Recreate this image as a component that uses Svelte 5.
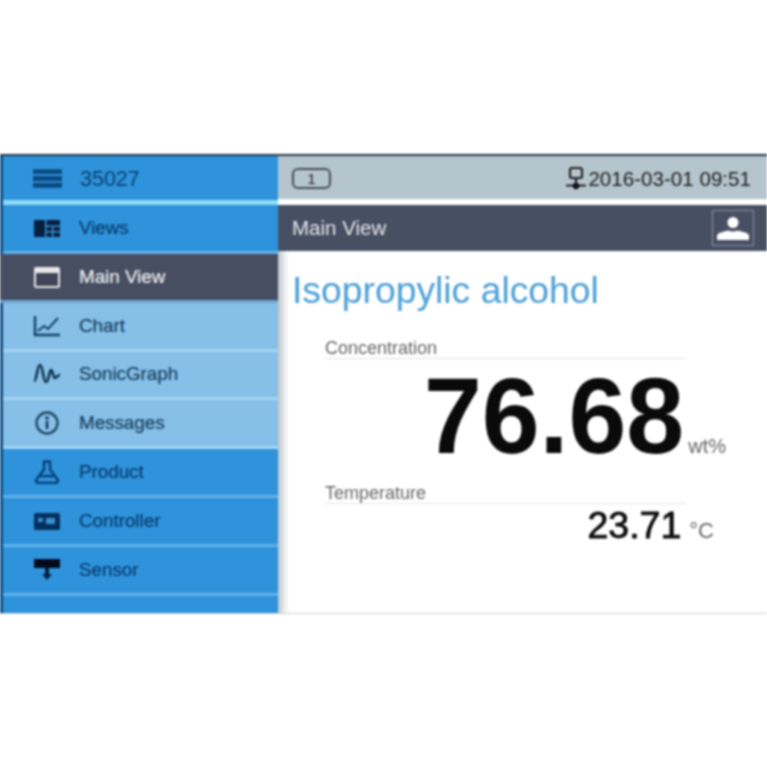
<script>
  const items = [
    { id: 'views', label: 'Views', tone: 'blue' },
    { id: 'main', label: 'Main View', tone: 'active' },
    { id: 'chart', label: 'Chart', tone: 'light' },
    { id: 'sonic', label: 'SonicGraph', tone: 'light' },
    { id: 'msg', label: 'Messages', tone: 'light' },
    { id: 'product', label: 'Product', tone: 'blue' },
    { id: 'controller', label: 'Controller', tone: 'blue' },
    { id: 'sensor', label: 'Sensor', tone: 'blue' }
  ];
</script>

<div class="page">
  <div class="device">
    <aside class="side">
      <div class="head">
        <svg class="burger" viewBox="0 0 28 18"><path d="M0 0h28v4.700H0zM0 6.600h28v4.700H0zM0 13.200h28v4.800H0z" fill="#0a4a80"/></svg>
        <span class="unit">35027</span>
      </div>
      {#each items as it}
        <div class="row {it.tone}">
          <svg class="ico" viewBox="0 0 28 24">
            {#if it.id === 'views'}
              <path d="M1 4h26v17H1z" fill="#051f3e"/>
              <path d="M13 9.500h14v1.500H13zM13 15h14v1.500H13zM12 4h1.500v17H12zM19 10h1.500v11H19z" fill="#3d8fd0"/>
            {:else if it.id === 'main'}
              <rect x="2" y="3" width="24" height="19" rx="1" fill="#3f4556" stroke="#e8e8e8" stroke-width="2"/>
              <path d="M2 4h24v4H2z" fill="#e8e8e8"/>
            {:else if it.id === 'chart'}
              <path d="M2 2v19h25" fill="none" stroke="#143f66" stroke-width="2.400"/>
              <path d="M5 17l6-5 4 3 10-11" fill="none" stroke="#143f66" stroke-width="2"/>
            {:else if it.id === 'sonic'}
              <path d="M1 19C4 19 4 3 7 3s3 17 6 17 3-12 5-12 2 8 4 8 2-3 5-3" fill="none" stroke="#12324c" stroke-width="2.600"/>
            {:else if it.id === 'msg'}
              <circle cx="14" cy="12" r="10.500" fill="none" stroke="#1d4866" stroke-width="2.400"/>
              <path d="M12.500 5.500h3v3h-3zM12.800 10h2.400v8h-2.400z" fill="#10304a"/>
            {:else if it.id === 'product'}
              <path d="M10 1.500h8M11 1.500v8L3 20q0 3 3 3h16q3 0 3-3l-8-10.500v-8M6 16h16" fill="none" stroke="#083f78" stroke-width="2.400"/>
            {:else if it.id === 'controller'}
              <rect x="1" y="4" width="26" height="17" rx="1.500" fill="#05305e"/>
              <path d="M5 9h5v4H5zM13 9h9v6h-9z" fill="#3d8fd0"/>
            {:else}
              <path d="M1 1h26v9H1z" fill="#030a1c"/>
              <path d="M12 10h4v7h-4zM9 16h10l-5 6z" fill="#06203f"/>
            {/if}
          </svg>
          <span>{it.label}</span>
        </div>
      {/each}
      <div class="tail"></div>
    </aside>

    <main class="main">
      <div class="status">
        <span class="badge">1</span>
        <span class="clock">
          <svg class="net" viewBox="0 0 20 24">
            <rect x="4" y="1.500" width="12" height="10" rx="2" fill="none" stroke="#222" stroke-width="2.200"/>
            <path d="M10 11v9M0 19h20" fill="none" stroke="#222" stroke-width="2.200"/>
            <circle cx="10" cy="19.500" r="3.200" fill="#111"/>
          </svg>
          2016-03-01 09:51
        </span>
      </div>
      <div class="titlebar">
        <span>Main View</span>
        <span class="user">
          <svg viewBox="0 0 34 30"><circle cx="17" cy="9.500" r="5.500" fill="#fff"/><path d="M1 27v-4q0-2.500 4-3.500l7-2q5 2 10 0l7 2q4 1 4 3.500v4z" fill="#fff"/></svg>
        </span>
      </div>
      <section class="content">
        <h1>Isopropylic alcohol</h1>
        <div class="metric first">
          <div class="label">Concentration</div>
          <div class="value big"><b>76.68</b><small>wt%</small></div>
        </div>
        <div class="metric second">
          <div class="label">Temperature</div>
          <div class="value mid"><b>23.71</b><small>°C</small></div>
        </div>
      </section>
    </main>
  </div>
</div>

<style>
  :global(body) { margin: 0; background: #fff; }
  .page {
    width: 767px; height: 767px; padding-top: 154px; box-sizing: border-box;
    font-family: "Liberation Sans", Arial, sans-serif; overflow: hidden;
    filter: blur(0.8px);
  }
  .device {
    display: flex; height: 460px; box-sizing: border-box;
    border-top: 2px solid #22384c; border-bottom: 1px solid #cfd2d4;
  }
  .side {
    width: 278px; flex: none; display: flex; flex-direction: column;
    border-left: 3px solid #0d4f86; box-sizing: border-box; background: #2f93db;
  }
  .head {
    height: 44px; flex: none; display: flex; align-items: center; padding-left: 30px;
    border-bottom: 5px solid #8fdcf8; background: #2f93db;
  }
  .burger { width: 29px; height: 19px; }
  .unit { margin: 3px 0 0 18px; font-size: 21.500px; color: #0a4478; }
  .row {
    height: 48.850px; flex: none; box-sizing: border-box; display: flex; align-items: center;
    padding-left: 30px; border-bottom: 3px solid #63b1ea; font-size: 18.800px; color: #083c70;
    -webkit-text-stroke: 0.2px currentColor;
  }
  .row span { margin-left: 18px; }
  .ico { width: 28px; height: 24px; flex: none; }
  .blue { background: #2f93db; }
  .active { background: #474e62; color: #eceef0; border-bottom-color: #6fa5cf; margin-left: -3px; padding-left: 33px; }
  .light { background: #86bfe8; color: #163f60; border-bottom-color: #a5d4f4; }
  .tail { flex: 1; background: #2f93db; }

  .main { flex: 1; display: flex; flex-direction: column; min-width: 0; }
  .status {
    height: 43px; flex: none; background: #b5c5cd; display: flex; align-items: center;
    justify-content: space-between; padding: 2px 16px 0 14px; box-sizing: border-box;
  }
  .badge {
    width: 35px; height: 17px; border: 2px solid #444c50; border-radius: 6px;
    font-size: 15px; color: #222; display: flex; align-items: center; justify-content: center;
  }
  .clock { display: flex; align-items: center; font-size: 20.600px; color: #1c1c1c; }
  .net { width: 20px; height: 25px; margin-right: 2px; }
  .titlebar {
    height: 46px; flex: none; margin-top: 6px; background: #474f63; color: #e6e8ea;
    display: flex; align-items: center; justify-content: space-between;
    padding: 0 13px 0 14px; font-size: 20.500px;
  }
  .user {
    width: 42px; height: 36px; border: 1px solid #8e94a3; display: flex;
    align-items: center; justify-content: center; box-sizing: border-box;
  }
  .user svg { width: 34px; height: 30px; }
  .content {
    flex: 1; position: relative; padding: 17px 0 0 14px; box-sizing: border-box; overflow: hidden;
    background: linear-gradient(to right, #bcc4c9 0, #e8eaec 6px, #fff 11px);
  }
  h1 { margin: 0; font-size: 37.300px; line-height: 44px; font-weight: 400; color: #4a9fd8; }
  .metric { width: 361px; margin-left: 33px; }
  .first { margin-top: 26px; }
  .second { margin-top: 8px; }
  .label { font-size: 18px; line-height: 20px; color: #666; border-bottom: 1px solid #e2e4e5; }
  .value { display: flex; align-items: baseline; justify-content: flex-end; color: #0a0a0a; white-space: nowrap; }
  .value small { color: #666; line-height: 1; }
  .big { height: 116px; margin-right: -40px; }
  .big b {
    font-size: 104px; line-height: 116px; font-weight: 700; margin-right: 4px;
    transform: scaleY(1.04); transform-origin: 50% 81%;
  }
  .big small { font-size: 20px; }
  .mid { height: 42px; margin-right: -28px; }
  .mid b { font-size: 37.500px; line-height: 42px; font-weight: 400; -webkit-text-stroke: 0.8px #0a0a0a; margin-right: 1px; }
  .mid small { margin-left: 7px; font-size: 22px; }
</style>
